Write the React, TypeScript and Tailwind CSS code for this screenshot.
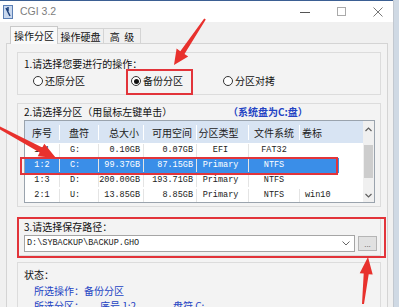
import React from 'react'

type Row = {
  no: string
  drive: string
  total: string
  free: string
  type: string
  fs: string
  label: string
  selected?: boolean
}

const rows: Row[] = [
  { no: '1:1', drive: 'G:', total: '0.10GB', free: '0.07GB', type: 'EFI', fs: 'FAT32', label: '' },
  { no: '1:2', drive: 'C:', total: '99.37GB', free: '87.15GB', type: 'Primary', fs: 'NTFS', label: '', selected: true },
  { no: '1:3', drive: 'D:', total: '200.00GB', free: '193.71GB', type: 'Primary', fs: 'NTFS', label: '' },
  { no: '2:1', drive: 'U:', total: '13.85GB', free: '8.85GB', type: 'Primary', fs: 'NTFS', label: 'win10' },
]

const cols = 'grid grid-cols-[34px_39px_45px_53px_52px_51px_40px_24px]'

// tapered red arrow, tail -> tip
function arrowPoints(x1: number, y1: number, x2: number, y2: number, head: number, half: number, w0: number, w1: number) {
  const dx = x2 - x1
  const dy = y2 - y1
  const len = Math.hypot(dx, dy)
  const ux = dx / len
  const uy = dy / len
  const nx = -uy
  const ny = ux
  const bx = x2 - ux * head
  const by = y2 - uy * head
  const p = (x: number, y: number) => `${x.toFixed(1)},${y.toFixed(1)}`
  return [
    p(x1 + nx * w0, y1 + ny * w0),
    p(bx + nx * w1, by + ny * w1),
    p(bx + nx * half, by + ny * half),
    p(x2, y2),
    p(bx - nx * half, by - ny * half),
    p(bx - nx * w1, by - ny * w1),
    p(x1 - nx * w0, y1 - ny * w0),
  ].join(' ')
}

function Radio({ checked, label, className }: { checked?: boolean; label: string; className?: string }) {
  return (
    <div className={`flex items-center ${className ?? ''}`}>
      <span className="w-[10px] h-[10px] rounded-full border border-[#333] bg-white flex items-center justify-center">
        {checked && <span className="w-[5px] h-[5px] rounded-full bg-[#111]" />}
      </span>
      <span className="ml-[2px] text-[10px] leading-[14px] text-[#111]">{label}</span>
    </div>
  )
}

function PartitionTable() {
  return (
    <div className="flex w-[351px] h-[83px] border border-[#9aa3ad] bg-white overflow-hidden">
      <div className="flex-1 flex flex-col">
        <div className={`${cols} h-[22px] bg-[#d8e4f3] text-[10px] text-[#222] items-center shrink-0`}>
          <div className="text-center">序号</div>
          <div className="text-center border-l border-white">盘符</div>
          <div className="text-right pr-[4px] border-l border-white">总大小</div>
          <div className="text-right pr-[4px] border-l border-white">可用空间</div>
          <div className="text-center pr-[8px] border-l border-white">分区类型</div>
          <div className="text-center border-l border-white">文件系统</div>
          <div className="pl-[2px] border-l border-white">卷标</div>
          <div />
        </div>
        {rows.map((r) => (
          <div
            key={r.no}
            className={`${cols} h-[15px] shrink-0 items-center text-[8.5px] font-['Liberation_Mono',monospace] ${
              r.selected ? 'bg-[#3a8ee8] text-white' : 'text-[#222]'
            }`}
          >
            <div className="text-center">{r.no}</div>
            <div className="pl-[10px] border-l border-[#e4e4e4]">{r.drive}</div>
            <div className="text-right pr-[3px] border-l border-[#e4e4e4]">{r.total}</div>
            <div className="text-right pr-[3px] border-l border-[#e4e4e4]">{r.free}</div>
            <div className="text-center pr-[4px] border-l border-[#e4e4e4]">{r.type}</div>
            <div className="text-center border-l border-[#e4e4e4]">{r.fs}</div>
            <div className="pl-[5px] border-l border-[#e4e4e4]">{r.label}</div>
            <div className="bg-white h-full" />
          </div>
        ))}
      </div>
      {/* scrollbar */}
      <div className="w-[13px] bg-[#f0f0f0] flex flex-col">
        <div className="h-[16px] flex items-center justify-center">
          <svg width="7" height="5" viewBox="0 0 7 5">
            <path d="M0.5 4 L3.5 1 L6.5 4" fill="none" stroke="#606060" strokeWidth="1.2" />
          </svg>
        </div>
        <div className="mx-[1px] mt-[8px] h-[33px] bg-[#cdcdcd]" />
        <div className="flex-1" />
        <div className="h-[14px] flex items-center justify-center">
          <svg width="7" height="5" viewBox="0 0 7 5">
            <path d="M0.5 1 L3.5 4 L6.5 1" fill="none" stroke="#606060" strokeWidth="1.2" />
          </svg>
        </div>
      </div>
    </div>
  )
}

export default function App() {
  return (
    <div className="relative w-[399px] h-[307px] overflow-hidden flex bg-[#cfd9e4] font-['Noto_Sans_CJK_SC',sans-serif]">
      <div className="w-[393px] flex flex-col border-t border-[#3b5f93]">
        {/* title bar */}
        <div className="h-[21px] bg-white flex items-center shrink-0">
          <svg className="ml-[3px]" width="10" height="14" viewBox="0 0 10 14">
            <rect x="0" y="0" width="10" height="14" fill="#5b7fb5" />
            <rect x="1" y="1" width="8" height="12" fill="#c9d8ee" />
            <path d="M3 3 L7 11 M5 2 L5 6" stroke="#1d3f7a" strokeWidth="1.5" />
          </svg>
          <span className="ml-[7px] text-[10.5px] text-[#7d7d7d] font-['Liberation_Sans',sans-serif]">CGI 3.2</span>
          <div className="flex-1" />
          <svg width="10" height="10" viewBox="0 0 10 10" className="mr-[27px]">
            <path d="M0 5.5 H10" stroke="#555" strokeWidth="1" />
          </svg>
          <svg width="9" height="9" viewBox="0 0 9 9" className="mr-[27px]">
            <rect x="0.5" y="0.5" width="8" height="8" fill="none" stroke="#aaa" strokeWidth="1" />
          </svg>
          <svg width="10" height="10" viewBox="0 0 10 10" className="mr-[10px]">
            <path d="M0.5 0.5 L9.5 9.5 M9.5 0.5 L0.5 9.5" stroke="#777" strokeWidth="1" />
          </svg>
        </div>

        {/* body */}
        <div className="flex-1 bg-[#f0f0f0] pl-[6px] pr-[5px] flex flex-col">
          {/* tabs */}
          <div className="h-[21px] flex items-end pl-[4px] text-[10px] text-[#111] shrink-0">
            <div className="relative z-10 -mb-px h-[18px] w-[48px] bg-[#f9f9f9] border border-b-0 border-[#c9c9c9] flex items-center justify-center">
              操作分区
            </div>
            <div className="h-[15px] w-[46px] bg-[#f0f0f0] border border-l-0 border-b-0 border-[#d4d4d4] flex items-center justify-center">
              操作硬盘
            </div>
            <div className="h-[15px] w-[37px] bg-[#f0f0f0] border border-l-0 border-b-0 border-[#d4d4d4] flex items-center justify-center">
              高&nbsp;&nbsp;级
            </div>
          </div>

          {/* panel */}
          <div className="flex-1 border border-[#d4d4d4] bg-[#f3f3f3] pl-[10px] pr-[6px] pt-[8px] flex flex-col">
            {/* group 1 */}
            <div className="h-[43px] border border-[#dcdcdc] pl-[6px] pt-[3px] shrink-0">
              <div className="text-[10px] leading-[16px] text-[#111]">1.请选择您要进行的操作：</div>
              <div className="flex h-[18px] items-center">
                <Radio label="还原分区" className="ml-[9px] w-[98px]" />
                <Radio label="备份分区" checked className="w-[92px]" />
                <Radio label="分区对拷" />
              </div>
            </div>

            {/* group 2 */}
            <div className="mt-[8px] h-[104px] border border-[#dcdcdc] pl-[6px] shrink-0">
              <div className="flex text-[10px] leading-[16px] text-[#111]">
                <span className="w-[204px]">2.请选择分区（用鼠标左键单击）</span>
                <span className="text-[#2443c3] font-bold">（系统盘为C:盘）</span>
              </div>
              <PartitionTable />
            </div>

            {/* group 3 */}
            <div className="mt-[11px] h-[38px] border border-[#dcdcdc] pl-[6px] shrink-0">
              <div className="text-[10px] leading-[16px] text-[#111]">3.请选择保存路径：</div>
              <div className="flex items-center">
                <div className="w-[331px] h-[17px] bg-white border border-[#a5a5a5] flex items-center pl-[2px] pr-[4px]">
                  <span className="flex-1 text-[8.5px] font-['Liberation_Mono',monospace] text-[#222]">D:\SYBACKUP\BACKUP.GHO</span>
                  <svg width="8" height="5" viewBox="0 0 8 5">
                    <path d="M0.5 0.5 L4 4 L7.5 0.5" fill="none" stroke="#666" strokeWidth="1" />
                  </svg>
                </div>
                <div className="ml-[3px] w-[19px] h-[15px] bg-[#e1e1e1] border border-[#b5b5b5] flex items-center justify-center text-[8px] text-[#777] leading-none">
                  ...
                </div>
              </div>
            </div>

            {/* status */}
            <div className="mt-[6px] flex-1 border border-[#dcdcdc] pl-[6px] pt-[4px] text-[10px]">
              <div className="leading-[16px] text-[#111]">状态：</div>
              <div className="pl-[10px] leading-[15px] text-[#2443c3]">所选操作：备份分区</div>
              <div className="pl-[10px] leading-[15px] text-[#2443c3] flex">
                <span className="w-[66px]">所选分区：</span>
                <span className="w-[73px]">序号 1:2</span>
                <span>盘符 C:</span>
              </div>
            </div>
          </div>
        </div>
      </div>
      <div className="flex-1 border-l border-[#c2c8d0]" />

      {/* red highlight boxes */}
      <div className="absolute left-[126px] top-[69px] w-[67px] h-[26px] border-2 border-[#e2343a]" />
      <div className="absolute left-[20px] top-[157px] w-[318px] h-[18px] border-2 border-[#e2343a]" />
      <div className="absolute left-[17px] top-[217px] w-[369px] h-[41px] border-2 border-[#e2343a]" />

      {/* arrows */}
      <svg className="absolute inset-0 pointer-events-none" width="399" height="307" viewBox="0 0 399 307">
        <polygon points={arrowPoints(205, 19, 174, 65, 15, 7, 1, 2.5)} fill="#e8312d" />
        <polygon points={arrowPoints(-2, 127, 56, 158, 17, 7, 1.2, 2.8)} fill="#e8312d" />
        <polygon points={arrowPoints(363, 304, 368, 257, 17, 6.5, 1, 2.5)} fill="#e8312d" />
      </svg>
    </div>
  )
}
